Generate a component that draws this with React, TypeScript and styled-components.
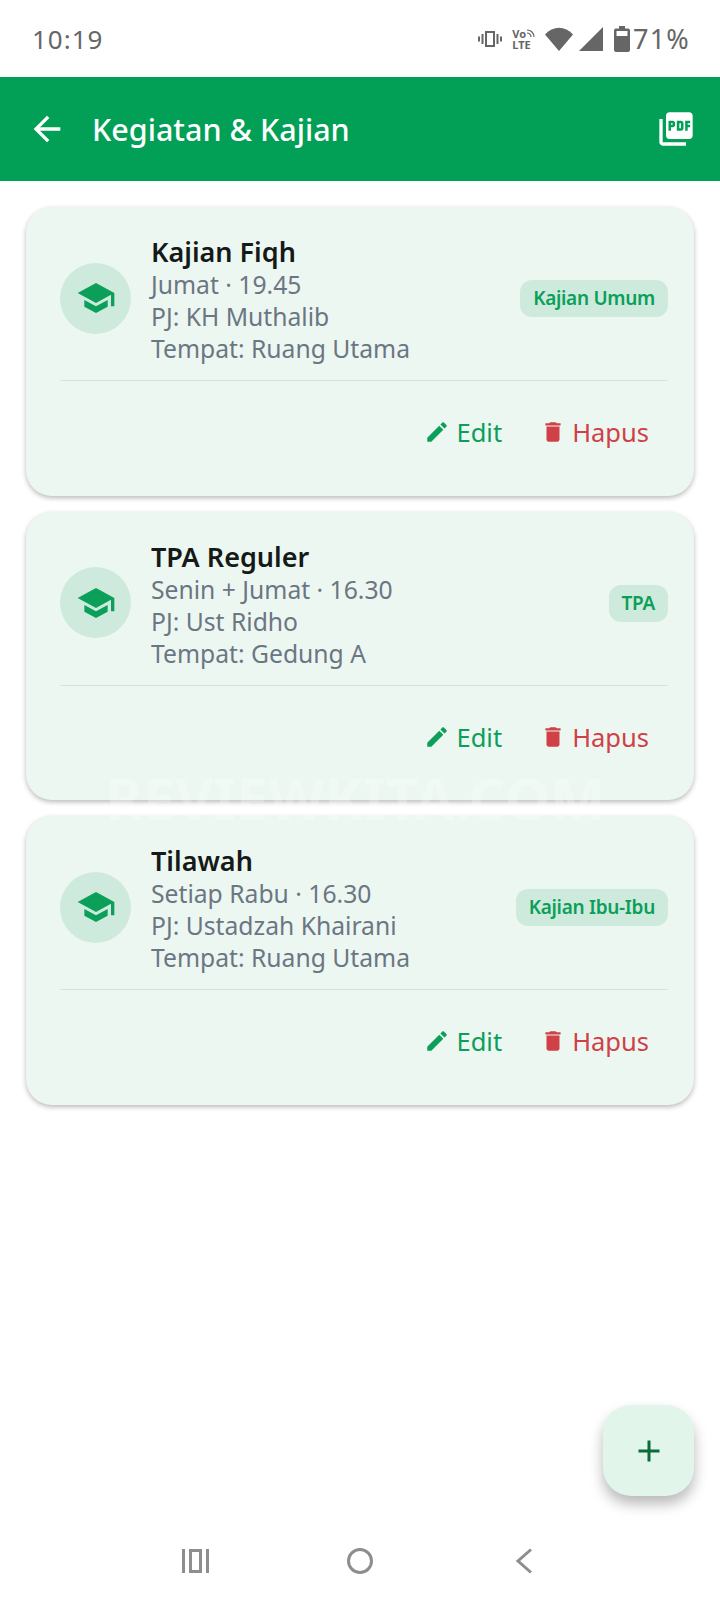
import styled, { createGlobalStyle } from "styled-components";

import type { ReactElement } from "react";

const FONT = `"Noto Sans", "Open Sans", sans-serif`;

const ACTIVITIES = [
	{ title: "Kajian Fiqh", schedule: "Jumat · 19.45", pic: "PJ: KH Muthalib", place: "Tempat: Ruang Utama", tag: "Kajian Umum" },
	{ title: "TPA Reguler", schedule: "Senin + Jumat · 16.30", pic: "PJ: Ust Ridho", place: "Tempat: Gedung A", tag: "TPA" },
	{ title: "Tilawah", schedule: "Setiap Rabu · 16.30", pic: "PJ: Ustadzah Khairani", place: "Tempat: Ruang Utama", tag: "Kajian Ibu-Ibu" },
];

function MaterialIcon({ d, size, color }: { d: string; size: number; color: string }): ReactElement {
	return (
		<svg width={size} height={size} viewBox="0 0 24 24" fill={color} aria-hidden="true">
			<path d={d} />
		</svg>
	);
}

const ICON_BACK = "M20 11H7.83l5.59-5.59L12 4l-8 8 8 8 1.41-1.41L7.83 13H20v-2z";
const ICON_PDF =
	"M20 2H8c-1.1 0-2 .9-2 2v12c0 1.1.9 2 2 2h12c1.1 0 2-.9 2-2V4c0-1.1-.9-2-2-2zm-8.5 7.5c0 .83-.67 1.5-1.5 1.5H9v2H7.5V7H10c.83 0 1.5.67 1.5 1.5v1zm5 2c0 .83-.67 1.5-1.5 1.5h-2.5V7H15c.83 0 1.5.67 1.5 1.5v3zm4-3H19v1h1.5V11H19v2h-1.5V7h3v1.5zM9 9.5h1v-1H9v1zM4 6H2v14c0 1.1.9 2 2 2h14v-2H4V6zm10 5.5h1v-3h-1v3z";
const ICON_SCHOOL = "M5 13.18v4L12 21l7-3.82v-4L12 17l-7-3.82zM12 3L1 9l11 6 9-4.91V17h2V9L12 3z";
const ICON_EDIT =
	"M3 17.25V21h3.75L17.81 9.94l-3.75-3.75L3 17.25zM20.71 7.04c.39-.39.39-1.02 0-1.41l-2.34-2.34c-.39-.39-1.02-.39-1.41 0l-1.83 1.83 3.75 3.75 1.83-1.83z";
const ICON_DELETE = "M6 19c0 1.1.9 2 2 2h8c1.1 0 2-.9 2-2V7H6v12zM19 4h-3.5l-1-1h-5l-1 1H5v2h14V4z";

export default function App(): ReactElement {
	return (
		<Page>
			<GlobalStyle />
			<StatusBar>
				<Clock>10:19</Clock>
				<StatusIcons>
					<svg width="24" height="18" viewBox="0 0 24 18" fill="#666" aria-hidden="true">
						<path d="M7 1h10v16H7zM9 3v12h6V3zM3.500 4h2v10h-2zM0 6.500h2v5H0zM18.500 4h2v10h-2zM22 6.500h2v5h-2z" fillRule="evenodd" />
					</svg>
					<VoLte>
						<VoLine>
							Vo
							<svg width="9" height="9" viewBox="0 0 9 9" fill="none" stroke="#666" strokeWidth="1.2" aria-hidden="true">
								<path d="M1 1c4 0 7 3 7 7M1 4c2.300 0 4 1.700 4 4" />
							</svg>
						</VoLine>
						<span>LTE</span>
					</VoLte>
					<svg width="28" height="24" viewBox="0 0 28 24" fill="#666" aria-hidden="true">
						<path d="M14 24L0 7.500C4 3 9 .8 14 .8S24 3 28 7.500z" />
					</svg>
					<SignalIcon width="24" height="24" viewBox="0 0 24 24" fill="#666" aria-hidden="true">
						<path d="M24 0v24H0z" />
					</SignalIcon>
					<svg width="16" height="26" viewBox="0 0 16 26" fill="#666" aria-hidden="true">
						<path
							d="M5 0h6v2.500h3a2 2 0 0 1 2 2V24a2 2 0 0 1-2 2H2a2 2 0 0 1-2-2V4.500a2 2 0 0 1 2-2h3zM2.500 5v5h11V5z"
							fillRule="evenodd"
						/>
					</svg>
					<Battery>71%</Battery>
				</StatusIcons>
			</StatusBar>

			<AppBar>
				<BackButton>
					<MaterialIcon d={ICON_BACK} size={40} color="#fff" />
				</BackButton>
				<AppTitle>Kegiatan &amp; Kajian</AppTitle>
				<MaterialIcon d={ICON_PDF} size={40} color="#fff" />
			</AppBar>

			<List>
				{ACTIVITIES.map((item) => (
					<Card key={item.title}>
						<CardTop>
							<IconCircle>
								<MaterialIcon d={ICON_SCHOOL} size={40} color="#0B9F59" />
							</IconCircle>
							<Details>
								<Title>{item.title}</Title>
								<Meta>{item.schedule}</Meta>
								<Meta>{item.pic}</Meta>
								<Meta>{item.place}</Meta>
							</Details>
							<Tag>{item.tag}</Tag>
						</CardTop>
						<Divider />
						<Actions>
							<ActionButton $color="#0B9F59">
								<MaterialIcon d={ICON_EDIT} size={26} color="#0B9F59" />
								Edit
							</ActionButton>
							<ActionButton $color="#CF4146">
								<MaterialIcon d={ICON_DELETE} size={26} color="#CF4146" />
								Hapus
							</ActionButton>
						</Actions>
					</Card>
				))}
			</List>

			<Watermark>REVIEWKITA.COM</Watermark>

			<Fab>
				<MaterialIcon d="M19 13h-6v6h-2v-6H5v-2h6V5h2v6h6v2z" size={36} color="#0B6B3A" />
			</Fab>

			<NavBar>
				<NavCell>
					<svg width="27" height="24" viewBox="0 0 27 24" fill="none" stroke="#8E8E8E" strokeWidth="3" aria-hidden="true">
						<path d="M1.500 0v24M25.500 0v24M8.500 1.500h10v21h-10z" />
					</svg>
				</NavCell>
				<NavCell>
					<svg width="26" height="26" viewBox="0 0 26 26" fill="none" stroke="#8E8E8E" strokeWidth="3" aria-hidden="true">
						<circle cx="13" cy="13" r="11.500" />
					</svg>
				</NavCell>
				<NavCell>
					<svg width="18" height="26" viewBox="0 0 18 26" fill="none" stroke="#8E8E8E" strokeWidth="3" aria-hidden="true">
						<path d="M16 1.500L3 13l13 11.500" />
					</svg>
				</NavCell>
			</NavBar>
		</Page>
	);
}

const GlobalStyle = createGlobalStyle`
	html,
	body {
		margin: 0;
		padding: 0;
		background: #fff;
	}
`;

const Page = styled.div`
	position: relative;
	display: flex;
	flex-direction: column;
	width: 720px;
	height: 1600px;
	overflow: hidden;
	background: #fff;
	font-family: ${FONT};
`;

const StatusBar = styled.div`
	display: flex;
	align-items: center;
	justify-content: space-between;
	height: 77px;
	padding: 0 30px 0 32px;
	box-sizing: border-box;
	color: #666;
`;

const Clock = styled.span`
	font-size: 26px;
	letter-spacing: 1px;
`;

const StatusIcons = styled.div`
	display: flex;
	align-items: center;
	gap: 10px;
`;

const SignalIcon = styled.svg`
	margin: 0 1px 0 -4px;
`;

const VoLte = styled.div`
	display: flex;
	flex-direction: column;
	font-size: 11px;
	font-weight: 700;
	line-height: 11px;
	color: #666;
`;

const VoLine = styled.span`
	display: flex;
	align-items: center;
`;

const Battery = styled.span`
	margin-left: -7px;
	font-size: 27px;
	letter-spacing: 1.2px;
`;

const AppBar = styled.header`
	display: flex;
	align-items: center;
	height: 104px;
	padding: 0 24px 0 27px;
	box-sizing: border-box;
	background: #02a056;
	color: #fff;
`;

const BackButton = styled.div`
	display: flex;
	width: 65px;
`;

const AppTitle = styled.h1`
	flex: 1;
	margin: 0;
	font-size: 30.5px;
	font-weight: 500;
`;

const List = styled.main`
	display: flex;
	flex: 1;
	flex-direction: column;
	gap: 16px;
	padding: 26px 26px 0;
`;

const Card = styled.article`
	display: flex;
	flex-direction: column;
	height: 288.5px;
	padding: 28px 26px 0 34px;
	box-sizing: border-box;
	border-radius: 26px;
	background: #edf7f2;
	box-shadow: 0 2px 5px rgba(0, 0, 0, 0.28);
`;

const CardTop = styled.div`
	display: flex;
	align-items: center;
	height: 130px;
	padding-bottom: 15px;
`;

const IconCircle = styled.div`
	display: flex;
	flex: none;
	align-items: center;
	justify-content: center;
	width: 71px;
	height: 71px;
	margin: 0 20px 4px 0;
	border-radius: 50%;
	background: #cdeadd;
`;

const Details = styled.div`
	display: flex;
	flex: 1;
	flex-direction: column;
`;

const Title = styled.h2`
	margin: 0;
	font-size: 27px;
	font-weight: 600;
	line-height: 34px;
	color: #151a18;
`;

const Meta = styled.p`
	margin: 0;
	font-size: 24.7px;
	line-height: 32px;
	color: #6b7683;
`;

const Tag = styled.span`
	align-self: flex-start;
	margin-top: 45px;
	padding: 0 13px;
	border-radius: 12px;
	background: #cdeadd;
	color: #0b9f59;
	font-size: 19px;
	font-weight: 600;
	letter-spacing: -0.3px;
	line-height: 37px;
`;

const Divider = styled.hr`
	width: 100%;
	margin: 0;
	border: 0;
	border-top: 1px solid #d8e2dd;
`;

const Actions = styled.div`
	display: flex;
	justify-content: flex-end;
	gap: 38px;
	padding: 31px 19px 0 0;
`;

const ActionButton = styled.span<{ $color: string }>`
	display: flex;
	align-items: center;
	gap: 6px;
	color: ${(props) => props.$color};
	font-size: 25.5px;
	line-height: 40px;
`;

const Watermark = styled.div`
	position: absolute;
	top: 768px;
	left: 105px;
	color: rgba(255, 255, 255, 0.24);
	font-size: 58px;
	font-weight: 700;
	line-height: 60px;
	white-space: nowrap;
	pointer-events: none;
`;

const Fab = styled.div`
	position: absolute;
	top: 1405px;
	left: 603px;
	display: flex;
	align-items: center;
	justify-content: center;
	width: 91px;
	height: 91px;
	border-radius: 28px;
	background: #e1f5eb;
	box-shadow: 0 8px 14px rgba(0, 0, 0, 0.28);
`;

const NavBar = styled.nav`
	display: flex;
	align-items: center;
	justify-content: center;
	height: 80px;
	padding: 2px 1px 0 0;
	box-sizing: border-box;
`;

const NavCell = styled.div`
	display: flex;
	align-items: center;
	justify-content: center;
	width: 164px;
`;
